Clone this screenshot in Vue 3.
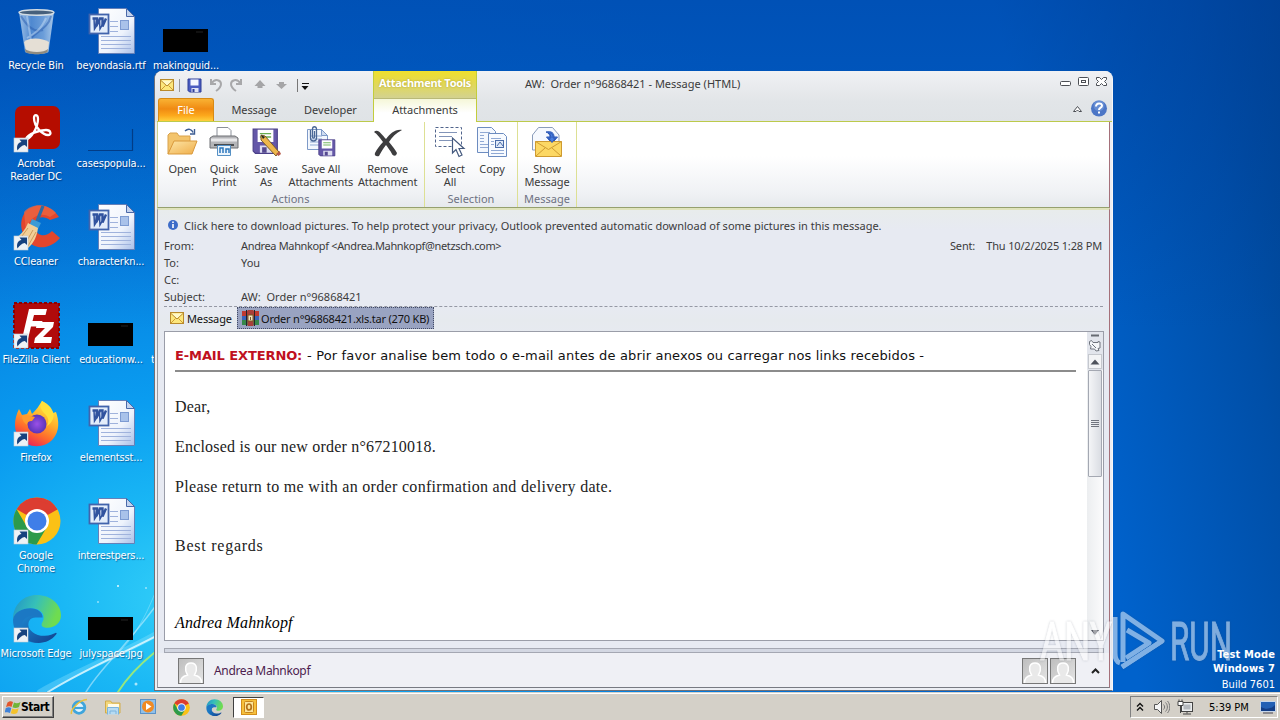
<script setup>
import { ref } from 'vue';

// Desktop shortcuts, placed on the desktop grid by column and row
const shortcuts = [
  { col: 0, row: 0, icon: 'bin', label: ['Recycle Bin'] },
  { col: 0, row: 1, icon: 'acrobat', label: ['Acrobat', 'Reader DC'], link: true },
  { col: 0, row: 2, icon: 'ccleaner', label: ['CCleaner'], link: true },
  { col: 0, row: 3, icon: 'filezilla', label: ['FileZilla Client'], link: true },
  { col: 0, row: 4, icon: 'firefox', label: ['Firefox'], link: true },
  { col: 0, row: 5, icon: 'chrome', label: ['Google', 'Chrome'], link: true },
  { col: 0, row: 6, icon: 'edge', label: ['Microsoft Edge'], link: true },
  { col: 1, row: 0, icon: 'word', label: ['beyondasia.rtf'] },
  { col: 1, row: 1, icon: 'blank', label: ['casespopula...'] },
  { col: 1, row: 2, icon: 'word', label: ['characterkn...'] },
  { col: 1, row: 3, icon: 'black', label: ['educationw...'] },
  { col: 1, row: 4, icon: 'word', label: ['elementsst...'] },
  { col: 1, row: 5, icon: 'word', label: ['interestpers...'] },
  { col: 1, row: 6, icon: 'black', label: ['julyspace.jpg'] },
  { col: 2, row: 0, icon: 'black', label: ['makingguid...'] },
];

const groups = [
  {
    name: 'Actions',
    width: 268,
    buttons: [
      { icon: 'open', label: ['Open'], width: 41 },
      { icon: 'print', label: ['Quick', 'Print'], width: 43 },
      { icon: 'saveas', label: ['Save', 'As'], width: 41 },
      { icon: 'saveall', label: ['Save All', 'Attachments'], width: 69 },
      { icon: 'remove', label: ['Remove', 'Attachment'], width: 65 },
    ],
  },
  {
    name: 'Selection',
    width: 93,
    buttons: [
      { icon: 'select', label: ['Select', 'All'], width: 42 },
      { icon: 'copy', label: ['Copy'], width: 42 },
    ],
  },
  {
    name: 'Message',
    width: 59,
    buttons: [{ icon: 'show', label: ['Show', 'Message'], width: 50 }],
  },
];

const headers = [
  { name: 'From:', value: 'Andrea Mahnkopf <Andrea.Mahnkopf@netzsch.com>', tight: true },
  { name: 'To:', value: 'You' },
  { name: 'Cc:', value: '' },
  { name: 'Subject:', value: 'AW:  Order n°96868421' },
];

const title = ref('AW:  Order n°96868421 - Message (HTML)');
</script>

<template>
  <div class="desktop">
    <!-- Shared gradients and symbols -->
    <svg class="defs" width="0" height="0">
      <defs>
        <linearGradient id="paper" x1="0" y1="0" x2="1" y2="1">
          <stop offset="0" stop-color="#fff" />
          <stop offset=".6" stop-color="#eef3fc" />
          <stop offset="1" stop-color="#a9bfe8" />
        </linearGradient>
        <linearGradient id="glass" x1="0" x2="1">
          <stop offset="0" stop-color="#b9d3ee" />
          <stop offset=".35" stop-color="#5d92d4" />
          <stop offset=".7" stop-color="#7fabdf" />
          <stop offset="1" stop-color="#c5dcf2" />
        </linearGradient>
        <linearGradient id="fox" x1=".8" y1="0" x2=".3" y2="1">
          <stop offset="0" stop-color="#fff14a" />
          <stop offset=".4" stop-color="#ffb02a" />
          <stop offset=".7" stop-color="#ff6a2c" />
          <stop offset="1" stop-color="#e8205a" />
        </linearGradient>
        <radialGradient id="globe">
          <stop offset="0" stop-color="#9a50e8" />
          <stop offset="1" stop-color="#5a35b8" />
        </radialGradient>
        <linearGradient id="edge1" x1="0" x2="1" y2=".3">
          <stop offset="0" stop-color="#2191c8" />
          <stop offset=".5" stop-color="#36c0b8" />
          <stop offset="1" stop-color="#6fdc50" />
        </linearGradient>
        <linearGradient id="edge2" x1="0" x2="1" y2="1">
          <stop offset="0" stop-color="#1c86d0" />
          <stop offset="1" stop-color="#123f8c" />
        </linearGradient>
        <linearGradient id="folder" x1="0" y1="0" x2="1" y2="1">
          <stop offset="0" stop-color="#fde6a8" />
          <stop offset="1" stop-color="#efad48" />
        </linearGradient>
        <linearGradient id="silver" x1="0" y1="0" x2="1" y2="1">
          <stop offset="0" stop-color="#bdbdbd" />
          <stop offset="1" stop-color="#e6e6e6" />
        </linearGradient>
      </defs>
      <symbol id="sym-mail" viewBox="0 0 14 12">
        <rect x=".5" y=".5" width="13" height="11" fill="#fce77c" stroke="#b98a2c" />
        <path d="M1 11l4.500-4.500M13 11L8.500 6.500" stroke="#cf9a33" fill="none" />
        <path d="M1 1.500l6 5.500 6-5.500" stroke="#b98a2c" fill="#fff8c8" />
      </symbol>
      <symbol id="sym-floppy" viewBox="0 0 24 24">
        <path d="M1 1h21.500v21.500H3l-2-2z" fill="#6457a8" stroke="#4a3f88" />
        <path d="M5 1.500h14v11H5z" fill="#fff" />
        <path d="M7 5h10M7 8h10" stroke="#68ae50" stroke-width="1.200" />
        <path d="M7 15.500h12V22H7z" fill="#dcdcf0" />
        <path d="M9 17h4v5H9z" fill="#55498f" />
      </symbol>
      <symbol id="sym-save" viewBox="0 0 15 15">
        <path d="M1 1h13v13H2.500L1 12.500z" fill="#4a5cc0" stroke="#2f3f98" />
        <path d="M3.500 1.500h8v6h-8z" fill="#f4f7ff" />
        <path d="M4.500 10h7v4h-7z" fill="#dfe3f6" />
        <path d="M5.500 11h2v3h-2z" fill="#2f3f98" />
      </symbol>
      <symbol id="sym-chrome" viewBox="0 0 48 48">
        <circle cx="24" cy="24" r="23.500" fill="#fbc116" />
        <path d="M24 24L3.600 12.200A23.500 23.500 0 0 1 44.400 12.500z" fill="#dc3d31" />
        <path d="M24 12.500h20.400L41 8 24 4z" fill="#dc3d31" />
        <path d="M24 24l10 6-10.500 17.500A23.500 23.500 0 0 1 3.600 12.200L14 30z" fill="#2c9a4b" />
        <circle cx="24" cy="24" r="12" fill="#fff" />
        <circle cx="24" cy="24" r="9.500" fill="#3f7ee8" />
      </symbol>
      <symbol id="sym-edge" viewBox="0 0 48 48">
        <path
          d="M1 25C1 10 12 1 24 1c14 0 24 9 24 20 0 7-6 12-13 12-5 0-6-2-6-3 0-2 2-3 2-7 0-5-5-9-12-9C10 14 3 18 1 25z"
          fill="url(#edge1)"
        />
        <path
          d="M1 25c1-7 9-11 17-11 7 0 12 4 12 9h-7c-5 0-8 4-8 9 0 8 8 15 17 14-12 5-31-1-31-21z"
          fill="#1b78c4"
        />
        <path
          d="M16 30c0 5 6 11 16 11 5 0 8-2 11-3 1 0 1 1 0 2-4 5-10 8-17 8C17 48 9 42 9 33c0-7 5-12 13-12-4 2-6 5-6 9z"
          fill="url(#edge2)"
        />
      </symbol>
      <symbol id="sym-person" viewBox="0 0 26 26">
        <rect x=".5" y=".5" width="25" height="25" fill="url(#silver)" stroke="#777" />
        <path
          d="M2.500 25c0-5 2-6.500 7-8-3-5-3-12 3.500-12s6.500 7 3.500 12c5 1.500 7 3 7 8"
          fill="#e9e9e9"
          stroke="#fff"
          stroke-width="1.500"
        />
      </symbol>
    </svg>

    <!-- Light rays at the bottom of the wallpaper -->
    <svg class="rays" width="156" height="150" viewBox="0 0 156 150">
      <g fill="none" stroke-linecap="round">
        <path d="M40 122C85 97 120 85 160 62" stroke="#8fe4ff" stroke-width="6" opacity=".35" />
        <path d="M48 122C85 99 122 84 160 64" stroke="#e8fbff" stroke-width="2" opacity=".8" />
        <path d="M86 122C100 98 122 82 160 30" stroke="#dff8ff" stroke-width="1.500" opacity=".5" />
        <path d="M118 122C128 106 142 92 160 78" stroke="#a5ec70" stroke-width="2" opacity=".9" />
        <path d="M110 90C125 78 142 60 160 10" stroke="#dff8ff" opacity=".3" />
      </g>
      <g fill="#e8fbff">
        <circle cx="118" cy="16" r="1" />
        <circle cx="136" cy="114" r="1.500" opacity=".7" />
        <circle cx="146" cy="18" r=".8" />
        <circle cx="98" cy="32" r=".8" />
      </g>
    </svg>

    <span class="clipped">t</span>

    <!-- Desktop icons -->
    <div
      v-for="s in shortcuts"
      :key="s.label[0]"
      class="shortcut"
      :style="{ left: s.col * 75 - 2 + 'px', top: 8 + s.row * 98 + 'px' }"
    >
      <svg class="shortcut-icon" viewBox="0 0 48 48">
        <g v-if="s.icon === 'bin'">
          <path d="M7 4h35l-5.500 40c-3 3-20 3-23.500 0z" fill="url(#glass)" opacity=".85" />
          <path d="M12 34c6-5 18-4 25 0l-1 9c-5 3-18 3-22 0z" fill="#e5dfd5" />
          <path d="M13 41c5 4 19 4 23 0l-.5 3c-3 3-19 3-22 0z" fill="#8f8b80" />
          <path d="M9 8c8 14 16 16 22 14M39 8c-3 12-12 14-20 22" stroke="#2a5cae" stroke-width="2" opacity=".5" fill="none" />
          <path d="M15 8l4 24M34 10c-5 12-12 16-19 20" stroke="#dcecfb" stroke-width="2" opacity=".4" fill="none" />
          <ellipse cx="24.500" cy="4.500" rx="17.500" ry="2.800" fill="#46607c" stroke="#d4dde4" stroke-width="1.400" />
        </g>
        <g v-else-if="s.icon === 'word'">
          <path d="M11.500.5h28l8 8v37h-36z" fill="url(#paper)" stroke="#6580b8" />
          <path d="M39.500.5v8h8z" fill="#c3d3ee" stroke="#4a68a8" />
          <path d="M23 13.500h8M23 18.500h8M23 23.500h8M14 28.500h30M14 32.500h30M14 36.500h30M14 40.500h30" stroke="#9fb2dc" />
          <rect x="33.500" y="12.500" width="8" height="9" fill="#a9c2ea" stroke="#7d9bd2" />
          <rect x="2.500" y="6.500" width="19" height="19" fill="#e3edfb" stroke="#4264ac" stroke-width="1.800" />
          <path d="M5.500 10.500h4.500l-1 8 4-8h2.500l0 8 3.500-8" fill="none" stroke="#31539f" stroke-width="2.400" />
          <path d="M7 10.500l.5 10.500 5-8 .5 8 5-9" fill="none" stroke="#31539f" stroke-width="1.500" />
        </g>
        <g v-else-if="s.icon === 'black'">
          <rect x="1" y="21" width="45" height="23" fill="#000" />
          <path d="M34 24h7" stroke="#222" />
        </g>
        <path v-else-if="s.icon === 'blank'" d="M1 44.500h44.500V23" fill="none" stroke="#023c86" stroke-width="1.200" />
        <g v-else-if="s.icon === 'acrobat'">
          <rect x="3" y="0" width="45" height="43" rx="7" fill="#b50d00" />
          <path
            d="M14 33c4 1 12-11 12-20 0-5-4-5-4-1 0 9 9 17 14 17 4 0 3-5-2-5-7 0-18 4-20 9z"
            fill="none"
            stroke="#fff"
            stroke-width="2.300"
          />
        </g>
        <g v-else-if="s.icon === 'ccleaner'">
          <path
            d="M47 13C41 4 30-1 21 3 9 7 6 22 13 33c6 12 23 15 35 1l-8-7c-7 7-15 5-17-3-3-8 6-15 15-8z"
            fill="#e2462d"
          />
          <path d="M12 8C20-1 35-1 44 9l-6 4C27 7 16 14 14 28z" fill="#ee6a45" opacity=".7" />
          <path d="M31 2l-6 15" stroke="#2a6da8" stroke-width="3.200" />
          <path d="M20 15l9 4-3 6-9-3z" fill="#3c9bd6" />
          <path d="M16 19l10 5c-1 8-4 15-10 20L3 34c6-3 10-8 13-15z" fill="#f2cf98" />
          <path d="M16 24L7 36M21 26l-8 14M24 28l-8 14" stroke="#cf9a5a" />
        </g>
        <g v-else-if="s.icon === 'filezilla'">
          <rect x="2" y="1" width="45" height="45" fill="#b10b0b" stroke="#8c0000" stroke-width="2" stroke-dasharray="3 2" />
          <path d="M10 37l7-30h18l-1.500 6H22l-1.500 6h10l-1.500 5.500H19L16 37z" fill="#fff" />
          <path d="M25 20h17l-1 5-10 10h9l-1 6H22l1-5 10-10h-9z" fill="#fff" />
        </g>
        <g v-else-if="s.icon === 'firefox'">
          <path
            d="M30 1c6 3 9 8 11 12l3-1c3 8 4 19-3 27-9 10-25 9-33 0C1 31 2 19 7 9l3 6 5-1 3-5 2 5c4-4 7-8 10-13z"
            fill="url(#fox)"
          />
          <circle cx="25" cy="24" r="9.500" fill="url(#globe)" />
          <path d="M10 16c5-2 9 0 13 1l-3 4c-3 0-5 1-5 4-3-2-5-5-5-9z" fill="#ff9b2c" />
          <path d="M30 1c-3 5-1 9 3 13s4 8 2 12c5-3 8-9 6-14C39 7 36 4 30 1z" fill="#ffe03c" />
        </g>
        <use v-else-if="s.icon === 'chrome'" href="#sym-chrome" x="1" y="-1" width="48" height="48" />
        <use v-else href="#sym-edge" x="0" y="-2" width="49" height="49" />
        <!-- Shortcut arrow -->
        <g v-if="s.link">
          <rect x="2" y="32" width="14" height="14" fill="#eef2f6" stroke="#c2ccd8" stroke-width=".6" />
          <path d="M5.500 44.500c-1.500-5 1-8 4-8.500l-2-2.500h7.500v7.500l-2.200-2c-3 .5-4.800 2-7.300 5.500z" fill="#17427e" />
        </g>
      </svg>
      <span v-for="line in s.label" :key="line" class="shortcut-label">{{ line }}</span>
    </div>

    <!-- Build number -->
    <div class="build">
      <strong>Test Mode</strong>
      <strong>Windows 7</strong>
      <span>Build 7601</span>
    </div>

    <!-- Outlook message window -->
    <section class="window">
      <header class="caption">
        <div class="caption-left">
          <div class="quick">
            <svg width="150" height="20" viewBox="0 0 150 20">
              <use href="#sym-mail" x="1" y="4" width="14" height="12" />
              <path d="M20.500 4v13" stroke="#999" />
              <use href="#sym-save" x="28" y="3" width="15" height="15" />
              <g fill="none" stroke="#a8a8aa" stroke-width="2">
                <path d="M52 4v5h5M52.500 8.500C56 3 62 5 62 9c0 3-2 5-5 7" />
                <path d="M82 4v5h-5M81.500 8.500C78 3 72 5 72 9c0 3 2 5 5 7" />
              </g>
              <path d="M101 5l5.500 6h-3v2h-5v-2h-3zM122.500 14l5.500-5h-3V7h-5v2h-3z" fill="#a5a5a7" />
              <path d="M138.500 4v13" stroke="#777" />
              <path d="M143 8.500h7" stroke="#111" />
              <path d="M142.500 11h7l-3.500 4z" fill="#111" />
            </svg>
          </div>
          <nav class="tabs">
            <span class="tab file">File</span>
            <span class="tab message">Message</span>
            <span class="tab developer">Developer</span>
          </nav>
        </div>
        <div class="context">
          <div class="context-title">Attachment Tools</div>
          <div class="context-tab">Attachments</div>
        </div>
        <div class="caption-right">
          <span class="title">{{ title }}</span>
          <svg class="controls" width="50" height="48" viewBox="0 0 50 48">
            <g fill="#fff" stroke="#4c4f55">
              <rect x="1.500" y="10.500" width="10" height="4" rx="1" />
              <rect x="19.500" y="6.500" width="10" height="8" rx="1" />
              <rect x="22.500" y="9.500" width="4" height="2" />
              <path d="M37.500 6.500h3l2 2 2-2h3v2l-2 2 2 2v2h-3l-2-2-2 2h-3v-2l2-2-2-2z" />
              <path d="M14.500 40.500l4-5 4 5h-2.500l-1.500-1.500-1.500 1.500z" />
            </g>
            <circle cx="40" cy="37.500" r="8" fill="#4c76c6" />
            <circle cx="40" cy="34.500" r="5.500" fill="#7fa3e0" opacity=".5" />
            <path d="M37 35.500c0-4 6-4 6-.8 0 2-3 2-3 4.300M40 40.500v2" fill="none" stroke="#fff" stroke-width="2" />
          </svg>
        </div>
      </header>

      <!-- Ribbon -->
      <div class="ribbon">
        <div v-for="g in groups" :key="g.name" class="group" :style="{ width: g.width + 'px' }">
          <div class="group-buttons">
            <div v-for="b in g.buttons" :key="b.icon" class="ribbon-btn" :style="{ width: b.width + 'px' }">
              <svg width="32" height="32" viewBox="0 0 32 32">
                <g v-if="b.icon === 'open'">
                  <path d="M2 28V9l2-2h7l2 3h11v5" fill="#f3c46c" stroke="#d9a24c" />
                  <path d="M2 28l6-13h23l-5 13z" fill="url(#folder)" stroke="#d9993c" />
                  <path d="M19 5c3-3 7-2 8 1.500M28.500 3v5h-4.500" fill="none" stroke="#3c5c92" stroke-width="1.400" />
                </g>
                <g v-else-if="b.icon === 'print'">
                  <path d="M9 12V1.500h11l3 3V12" fill="#fff" stroke="#8a8f98" />
                  <path d="M2 12l3-2h22l3 2v10H2z" fill="#b4b5b8" stroke="#6e7074" />
                  <path d="M3 12.500h26v3H3z" fill="#e8e8ea" />
                  <path d="M6 18h20v2H6z" fill="#4a4c50" />
                  <path d="M9.500 19.500h13v10h-13z" fill="#eaf4fd" stroke="#5590c4" />
                  <path d="M12 27v-5h3v5m3 0v-4h3v4" fill="none" stroke="#2c77bc" stroke-width="1.500" />
                </g>
                <g v-else-if="b.icon === 'saveas'">
                  <use href="#sym-floppy" x="2" y="2" width="27" height="27" />
                  <path d="M11 9l4 1 14 16-3 4-15-16z" fill="#edb74c" stroke="#7a5c28" />
                  <path d="M11 9l2 4 2-2z" fill="#222" />
                  <path d="M26 28l3.500-3 1.500 3-2.500 2z" fill="#b65a48" />
                </g>
                <g v-else-if="b.icon === 'saveall'">
                  <path d="M2.500 3.500h14l6 6v14h-20z" fill="#f4f8fe" stroke="#7e9ac8" />
                  <path d="M5 10h12M5 13h12M5 16h12M5 19h12" stroke="#8fa9d4" />
                  <path d="M16.500 3.500v6h6z" fill="#cfdcf0" stroke="#7e9ac8" />
                  <path d="M5.500 4v8c0 4 6 4 6 0V3c0-3-4-3-4 0v8c0 1.500 2 1.500 2 0V5" fill="none" stroke="#4a6796" stroke-width="1.300" />
                  <use href="#sym-floppy" x="13" y="13" width="18" height="18" />
                </g>
                <path
                  v-else-if="b.icon === 'remove'"
                  d="M2 6c4-4 8 3 12 7 4-5 9-10 16-9-6 3-10 7-13 12 3 4 6 7 8 11-1 4-4 3-5 1-2-4-4-6-6-9-3 4-5 7-7 11-3 1-5-1-4-3 2-4 5-8 8-11C8 12 5 8 2 6z"
                  fill="#3d3d3f"
                />
                <g v-else-if="b.icon === 'select'">
                  <rect x="1.500" y="1.500" width="26" height="19" fill="none" stroke="#50648c" stroke-dasharray="3 2" />
                  <path d="M5 6.500h18M5 10.500h13M5 14.500h14" stroke="#8294b8" />
                  <path d="M18.500 12v15l3.500-3.500 3 7 3-1.500-3-6.500h5z" fill="#fff" stroke="#44597e" stroke-width="1.200" />
                </g>
                <g v-else-if="b.icon === 'copy'">
                  <path d="M1.500 1.500h14l4 4v21h-18z" fill="#f4f8fe" stroke="#6c8cc0" />
                  <path d="M4 6.500h10M4 9.500h4M4 12.500h4M4 15.500h4M4 18.500h12M4 21.500h12" stroke="#90a9d4" />
                  <path d="M12.500 7.500h15l3 3v20h-18z" fill="#f8fbff" stroke="#6c8cc0" />
                  <path d="M15 12.500h10M15 15.500h3M15 18.500h3M15 24.500h13M15 27.500h13" stroke="#90a9d4" />
                  <rect x="19.500" y="14.500" width="8" height="7" fill="#dfe9f8" stroke="#4a6ca8" />
                  <path d="M21 20l3-4 3 4" fill="none" stroke="#4a6ca8" />
                </g>
                <g v-else>
                  <path d="M1.500 24V9l6-7.500h14L28 9v15z" fill="#f6f9fe" stroke="#8a9cba" />
                  <path d="M15 6c6-1 8 1 8 5h3.500L21 17.500 15.500 11H19c0-2-1-4-4-5z" fill="#4a7fe0" stroke="#2c57b4" />
                  <path d="M4.500 15.500h26v15h-26z" fill="#fcd864" stroke="#cf9b30" />
                  <path d="M4.500 15.500l13 8 13-8M5 30l9-8M30 30l-9-8" fill="none" stroke="#cf9b30" />
                  <path d="M17 7c4 0 5 1 5 5h2.500L21 16.500 17.500 12H20c0-3-1-4-3-5z" fill="#4a7fe0" stroke="#2c57b4" />
                </g>
              </svg>
              <span v-for="line in b.label" :key="line">{{ line }}</span>
            </div>
          </div>
          <div class="group-name">{{ g.name }}</div>
        </div>
      </div>

      <div class="content">
        <div class="info">
          <svg width="10" height="10" viewBox="0 0 10 10">
            <circle cx="5" cy="5" r="5" fill="#3d6cc8" />
            <path d="M5 1.500v1.500M5 4v4" stroke="#fff" stroke-width="1.600" />
          </svg>
          <span>Click here to download pictures. To help protect your privacy, Outlook prevented automatic download of some pictures in this message.</span>
        </div>
        <div class="headers">
          <div>
            <div v-for="h in headers" :key="h.name" class="header-row">
              <span class="header-name">{{ h.name }}</span>
              <span class="header-value" :class="{ tight: h.tight }">{{ h.value }}</span>
            </div>
          </div>
          <div class="sent"><span>Sent:</span><span>Thu 10/2/2025 1:28 PM</span></div>
        </div>

        <!-- Attachment tabs -->
        <div class="attachments">
          <div class="att message-att">
            <svg width="14" height="12"><use href="#sym-mail" /></svg>
            <span>Message</span>
          </div>
          <div class="att selected">
            <svg width="17" height="16" viewBox="0 0 17 16">
              <rect y="1" width="17" height="5" fill="#c0392f" />
              <rect y="6" width="17" height="4" fill="#3a63b8" />
              <rect y="10" width="17" height="5" fill="#35884a" />
              <path d="M4.500 0v16M12.500 0v16" stroke="#23252c" stroke-width="1" />
              <rect x="5.500" y="0" width="6" height="16" fill="#a8403a" />
              <rect x="6" y="5" width="5" height="6" fill="#f1e4c0" stroke="#7a5a24" />
              <path d="M8.500 7v3" stroke="#7a5a24" />
            </svg>
            <span>Order n°96868421.xls.tar (270 KB)</span>
          </div>
        </div>

        <!-- Message body -->
        <div class="body">
          <div class="mail">
            <p class="warning"><b>E-MAIL EXTERNO:</b><span>- Por favor analise bem todo o e-mail antes de abrir anexos ou carregar nos links recebidos -</span></p>
            <p class="dear">Dear,</p>
            <p class="enclosed">Enclosed is our new order n°67210018.</p>
            <p class="please">Please return to me with an order confirmation and delivery date.</p>
            <p class="regards">Best regards</p>
            <p class="sign">Andrea Mahnkopf</p>
          </div>
          <div class="scrollbar">
            <svg width="16" height="38" viewBox="0 0 16 38">
              <path d="M4 3.500h8" stroke="#666a72" stroke-width="2" />
              <path d="M2.500 9.500l2-1 1.500 2h5v-1l2 .5v6l-2 .5 1 2-3 .5-1.500-2h-4l.5-2.500-1.500-2z" fill="#f4f6f8" stroke="#70757e" />
              <path d="M5 12l4 4" stroke="#70757e" />
              <rect x="1.500" y="22.500" width="13" height="14" fill="#f3f4f6" stroke="#c5c8ce" />
              <path d="M3.500 32.500h9l-4.500-5z" fill="#4e525c" />
            </svg>
            <div class="thumb"><i></i><i></i><i></i><i></i></div>
            <div class="arrow-down"></div>
          </div>
        </div>

        <div class="splitter"></div>

        <!-- People pane -->
        <footer class="people">
          <svg width="26" height="26"><use href="#sym-person" /></svg>
          <span class="person">Andrea Mahnkopf</span>
          <svg class="avatar" width="26" height="26"><use href="#sym-person" /></svg>
          <svg class="avatar" width="26" height="26"><use href="#sym-person" /></svg>
          <svg class="expand" width="9" height="6" viewBox="0 0 9 6"><path d="M1 5l3.500-3.500L8 5" fill="none" stroke="#222" stroke-width="2" /></svg>
        </footer>
      </div>
    </section>

    <!-- Watermark -->
    <svg class="watermark" width="200" height="80" viewBox="0 0 200 80">
      <text x="4" y="52" textLength="72" lengthAdjust="spacingAndGlyphs">ANY</text>
      <text x="134" y="52" textLength="62" lengthAdjust="spacingAndGlyphs">RUN</text>
      <g fill="none" stroke="#fff" stroke-width="5" stroke-linejoin="round">
        <path d="M87 54V6l39 27-40 26" />
        <path d="M91 22l22 13-23 15" />
        <path d="M79 9v36c0 6 2 9 5 10M126 33l-40 26" />
      </g>
    </svg>

    <!-- Taskbar -->
    <div class="taskbar">
      <div class="start">
        <svg width="16" height="15" viewBox="0 0 16 15">
          <path d="M2.500 2.500C5 .5 6.500 1 8 2L6.500 7C5 6 3.500 6 1 7z" fill="#e2562c" />
          <path d="M9 2.500c2 1 4 1 6.500-.5L14 7c-2.500 1.500-4.500 1.300-6.500.3z" fill="#72b536" />
          <path d="M.8 8c2-1 4-1 5.500 0L5 13C3.500 12-1 12-.5 13z" fill="#3f82d8" />
          <path d="M7.200 8.500c2 1 4 1 6.500-.2L12.200 13c-2 1.500-4.500 1.300-6.500.3z" fill="#f4c22c" />
        </svg>
        <b>Start</b>
      </div>
      <div class="launch">
        <svg width="18" height="18" viewBox="0 0 18 18">
          <circle cx="9" cy="9.500" r="5.800" fill="#e4f4fc" stroke="#3fa5dc" stroke-width="2.800" />
          <path d="M4 10h11" stroke="#3fa5dc" stroke-width="2.200" />
          <path d="M1.500 16C0 12 9 2 17 1.500" fill="none" stroke="#e8c23c" stroke-width="1.500" />
        </svg>
        <svg width="18" height="18" viewBox="0 0 18 18">
          <path d="M1.500 15V3h5l1.500 2h8v10z" fill="#f2d77c" stroke="#d2ac4a" />
          <path d="M4 6h11v4H4z" fill="#fffbe8" />
          <path d="M3.500 16.500V9.500h11v7M6 16v-3h6v3" fill="#b7dbf2" stroke="#7cb4dc" />
        </svg>
        <svg width="18" height="18" viewBox="0 0 18 18">
          <rect x="1.500" y="1.500" width="15" height="14" fill="#8fc0ea" stroke="#5a92c8" />
          <circle cx="9" cy="8.500" r="6" fill="#f08a24" />
          <path d="M7 5v7l5.500-3.500z" fill="#fff" />
        </svg>
        <svg width="17" height="17"><use href="#sym-chrome" /></svg>
        <svg width="17" height="17"><use href="#sym-edge" /></svg>
      </div>
      <div class="running">
        <svg width="18" height="18" viewBox="0 0 18 18">
          <rect x="1.500" y="1.500" width="15" height="15" fill="#f6c03c" stroke="#d48e1c" />
          <rect x="4.500" y="3.500" width="9" height="11" rx="1" fill="#fbe49a" stroke="#c8831c" />
          <ellipse cx="9" cy="9" rx="2.300" ry="3" fill="none" stroke="#b5711a" stroke-width="1.700" />
        </svg>
      </div>
      <div class="tray">
        <svg width="8" height="10" viewBox="0 0 8 10"><path d="M1 4.500l3-3 3 3M1 8.500l3-3 3 3" fill="none" stroke="#111" stroke-width="1.400" /></svg>
        <svg class="speaker" width="17" height="16" viewBox="0 0 17 16">
          <path d="M1.500 5.500h3l4-4v13l-4-4h-3z" fill="#f4f4f4" stroke="#555" />
          <path d="M10.500 5.500c1.500 1.500 1.500 3.500 0 5M12.500 3.500c2.500 2.500 2.500 6.500 0 9M14.500 2c3 3.500 3 8.500 0 12" fill="none" stroke="#777" />
        </svg>
        <svg class="network" width="16" height="16" viewBox="0 0 16 16">
          <rect x="4.500" y="3.500" width="11" height="9" fill="#eceeef" stroke="#444" />
          <rect x="6.500" y="5.500" width="7" height="5" fill="#b4b8bd" />
          <path d="M6 15h8M10 12.500v2" stroke="#444" />
          <path d="M1 2.500h5v4H1zM2 .5v2M5 .5v2M3.500 6.500V14" fill="#fff" stroke="#444" />
        </svg>
        <span class="clock">5:39 PM</span>
        <svg width="16" height="13" viewBox="0 0 16 13">
          <path d="M.5.5h15v10H.5z" fill="#2360b4" stroke="#c6d6ea" />
          <path d="M1 6c5 3 10 2 14-2v6H1z" fill="#143e86" />
          <path d="M3 12h10" stroke="#445" />
        </svg>
      </div>
    </div>
  </div>
</template>

<style>
body {
  overflow: hidden;
}
</style>

<style scoped>
.desktop {
  position: relative;
  width: 1280px;
  height: 720px;
  overflow: hidden;
  display: flex;
  flex-direction: column;
  justify-content: flex-end;
  font-family: 'DejaVu Sans Condensed', 'DejaVu Sans', sans-serif;
  font-size: 11px;
  background:
    linear-gradient(180deg, rgba(0, 64, 160, 0.5) 0, rgba(0, 70, 180, 0) 330px),
    radial-gradient(ellipse 900px 680px at 190px 600px, #34d0f8 0%, #1ab8f5 14%, #0a9cf0 30%, #0580e0 52%, #0064ce 80%, rgba(0, 98, 204, 0) 100%),
    linear-gradient(78deg, #0062cc 80%, #004fa8 93%, #00438e 100%);
}

.defs {
  position: absolute;
}

.rays {
  position: absolute;
  left: 0;
  top: 570px;
}

.clipped {
  position: absolute;
  left: 151px;
  top: 353px;
  color: #fff;
}

/* Desktop icons */
.shortcut {
  position: absolute;
  width: 76px;
  display: flex;
  flex-direction: column;
  align-items: center;
}

.shortcut-icon {
  width: 48px;
  height: 48px;
  margin-bottom: 3px;
  overflow: visible;
}

.shortcut-label {
  color: #fff;
  line-height: 13px;
  letter-spacing: -0.15px;
  white-space: nowrap;
  text-shadow: 1px 1px 1px rgba(0, 20, 70, 0.5);
}

.build {
  position: absolute;
  right: 5px;
  top: 648px;
  display: flex;
  flex-direction: column;
  align-items: flex-end;
  color: #fff;
  line-height: 14px;
}

.build strong {
  letter-spacing: 0.15px;
}

.build span {
  line-height: 18px;
}

/* Window frame */
.window {
  position: absolute;
  left: 154px;
  top: 71px;
  width: 959px;
  height: 620px;
  box-sizing: border-box;
  display: flex;
  flex-direction: column;
  padding: 0 2px 2px;
  border: 1px solid #6f7077;
  border-top: 0;
  border-right-color: #f6f6f8;
  border-radius: 8px 8px 0 0;
  background: #eceef3;
  font-family: 'Noto Sans', 'Open Sans', sans-serif;
  color: #3b3b3b;
  overflow: hidden;
}

.caption {
  display: flex;
  height: 51px;
  margin: 0 -2px;
  padding-left: 2px;
  background: linear-gradient(#f0f1f4, #e2e5e8 60%, #dfe3e6);
}

.caption-left {
  width: 216px;
  display: flex;
  flex-direction: column;
  border-bottom: 1px solid #bcca4c;
}

.quick {
  height: 27px;
  padding: 4px 0 0 2px;
  box-sizing: border-box;
}

.tabs {
  display: flex;
  flex: 1;
}

.tab {
  text-align: center;
  line-height: 23px;
}

.file {
  width: 56px;
  margin-left: 1px;
  box-sizing: border-box;
  border: 1px solid #d88a14;
  border-bottom: 0;
  border-radius: 3px 3px 0 0;
  background: linear-gradient(#f9b233, #f08a12 45%, #fca81c 75%, #ffcf3c);
  color: #fff;
  line-height: 22px;
}

.message {
  width: 80px;
  letter-spacing: -0.1px;
}

.developer {
  width: 73px;
}

.context {
  width: 104px;
  box-sizing: border-box;
  border: 1px solid #c3cd3c;
  border-width: 0 1px;
  background: #fff;
}

.context-title {
  height: 27px;
  border-bottom: 1px solid #b9b978;
  background: linear-gradient(#f0e02c, #e4d94e 40%, #d3d290);
  color: #fff;
  font-weight: bold;
  text-align: center;
  line-height: 24px;
  white-space: nowrap;
  letter-spacing: -0.3px;
  text-shadow: 0 0 2px #a89c30;
}

.context-tab {
  height: 23px;
  line-height: 22px;
  text-align: center;
  background: linear-gradient(#f5f7d8, #fff 60%);
}

.caption-right {
  flex: 1;
  display: flex;
  justify-content: space-between;
  padding-left: 48px;
  border-bottom: 1px solid #bcca4c;
}

.title {
  line-height: 25px;
  white-space: pre;
}

.controls {
  margin-right: 3px;
}

/* Ribbon */
.ribbon {
  display: flex;
  height: 86px;
  box-sizing: border-box;
  border-bottom: 1px solid #95a06e;
  border-left: 1px solid #c9d28c;
  border-right: 1px solid #a5707a;
  background: linear-gradient(#fff 40%, #eff1f4 85%, #e6e9ed);
}

.group {
  box-sizing: border-box;
  display: flex;
  flex-direction: column;
  border-right: 1px solid #dde094;
}

.group:first-child {
  margin-left: -1px;
}

.group-buttons {
  display: flex;
  flex: 1;
  padding: 4px 4px 0 5px;
}

.group:not(:first-child) .group-buttons {
  padding-left: 4px;
}

.ribbon-btn {
  display: flex;
  flex-direction: column;
  align-items: center;
  line-height: 13px;
}

.ribbon-btn svg {
  flex: none;
  margin-bottom: 4px;
}

.ribbon-btn span {
  white-space: nowrap;
  letter-spacing: -0.1px;
}

.group-name {
  height: 15px;
  line-height: 13px;
  text-align: center;
  color: #6e7282;
}

/* Message headers */
.content {
  flex: 1;
  display: flex;
  flex-direction: column;
  padding: 0 6px 0 6px;
  border: 1px solid #a5707a;
  border-top: 2px solid #dfe3bc;
  border-left-color: #9a9aa0;
  border-bottom-color: #777a82;
  background: linear-gradient(#e8ecec, #e7eaf2 20px, #e7eaf2 95px, #e6eaee 110px, #e7eaf2 135px);
}

.info {
  display: flex;
  align-items: center;
  gap: 6px;
  height: 27px;
  padding: 3px 0 0 4px;
  box-sizing: border-box;
  white-space: nowrap;
}

.headers {
  display: flex;
  justify-content: space-between;
  height: 69px;
  border-bottom: 1px dashed #9598a4;
}

.header-row {
  display: flex;
  height: 17px;
  line-height: 18px;
}

.header-name {
  width: 77px;
}

.header-value {
  white-space: pre;
}

.header-value.tight {
  letter-spacing: -0.35px;
}

.sent {
  display: flex;
  gap: 11px;
  line-height: 18px;
  padding-right: 1px;
  letter-spacing: -0.15px;
}

.attachments {
  display: flex;
  height: 24px;
}

.att {
  display: flex;
  align-items: center;
  box-sizing: border-box;
  height: 22px;
  color: #111;
  white-space: nowrap;
}

.message-att {
  width: 73px;
  padding-left: 6px;
  gap: 3px;
}

.message-att span {
  letter-spacing: -0.15px;
}

.selected {
  width: 197px;
  padding-left: 4px;
  gap: 2px;
  border: 1px dotted #444c66;
  background: #99a3c1;
  letter-spacing: -0.2px;
}

/* Message body */
.body {
  display: flex;
  width: 940px;
  height: 310px;
  box-sizing: border-box;
  border: 1px solid #9a9da8;
  background: #fff;
  color: #222;
}

.mail {
  width: 902px;
  padding: 12px 11px 0 10px;
  font-family: 'Liberation Serif', serif;
  font-size: 16px;
}

.mail p {
  margin: 0;
  line-height: 20px;
  white-space: nowrap;
}

.mail .warning {
  display: flex;
  height: 26px;
  border-bottom: 2px solid #8c8c8c;
  margin-bottom: 25px;
  line-height: 24px;
  font-family: 'DejaVu Sans', sans-serif;
  font-size: 13px;
  letter-spacing: 0.16px;
  color: #111;
}

.warning b {
  width: 132px;
  letter-spacing: -0.1px;
  color: #c01020;
}

.mail .dear,
.mail .enclosed {
  margin-bottom: 20px;
  letter-spacing: 0.2px;
}

.mail .please {
  margin-bottom: 39px;
  letter-spacing: 0.31px;
}

.mail .regards {
  margin-bottom: 57px;
  letter-spacing: 0.75px;
}

.mail .sign {
  font-style: italic;
  letter-spacing: 0.15px;
  color: #000;
}

.scrollbar {
  width: 16px;
  display: flex;
  flex-direction: column;
  background: linear-gradient(90deg, #eceef0, #fbfbfc);
}

.scrollbar svg {
  background: #e2e5ec;
}

.thumb {
  height: 105px;
  margin: 0 1px;
  border: 1px solid #a4a8b2;
  border-radius: 1px;
  background: linear-gradient(90deg, #f4f5f7, #dadde3);
  display: flex;
  flex-direction: column;
  align-items: center;
  justify-content: center;
  gap: 1px;
}

.thumb i {
  width: 8px;
  height: 1px;
  background: #70747e;
}

.arrow-down {
  width: 0;
  margin: auto auto 5px 4px;
  border: 4px solid transparent;
  border-top: 5px solid #444852;
  border-bottom: 0;
}

.splitter {
  width: 938px;
  height: 3px;
  margin-top: 7px;
  border: 1px solid #a4a7b2;
  background: #d3d7e2;
}

.people {
  flex: 1;
  display: flex;
  align-items: center;
  margin: 0 -6px;
  padding: 1px 8px 0 20px;
  background: #eff0f5;
}

.person {
  flex: 1;
  margin-left: 10px;
  font-size: 12px;
  letter-spacing: -0.35px;
  color: #4c1c4e;
}

.avatar {
  margin-left: 2px;
}

.expand {
  margin: 0 1px 0 15px;
}

/* Watermark */
.watermark {
  position: absolute;
  left: 1036px;
  top: 608px;
  opacity: 0.5;
  filter: drop-shadow(0 0 1px rgba(60, 70, 90, 0.5));
}

.watermark text {
  font-family: Roboto, sans-serif;
  font-size: 53px;
  font-weight: 400;
  fill: #fff;
  stroke: #fff;
  stroke-width: 1px;
}

/* Taskbar */
.taskbar {
  position: relative;
  display: flex;
  align-items: center;
  height: 28px;
  box-sizing: border-box;
  padding: 1px 2px 0;
  border-top: 1px solid #d4d0c8;
  box-shadow: inset 0 1px #fff;
  background: #d4d0c8;
  color: #000;
}

.start {
  display: flex;
  align-items: center;
  gap: 0;
  width: 52px;
  height: 22px;
  box-sizing: border-box;
  padding-left: 2px;
  border: 1px solid #fff;
  border-right-color: #404040;
  border-bottom-color: #404040;
  box-shadow: inset -1px -1px #808080;
  font-size: 12px;
  letter-spacing: -0.5px;
}

.launch {
  display: flex;
  align-items: center;
  justify-content: space-between;
  width: 153px;
  margin-left: 16px;
}

.running {
  display: flex;
  align-items: center;
  justify-content: center;
  width: 31px;
  height: 21px;
  box-sizing: border-box;
  margin-left: 10px;
  border: 1px solid #404040;
  border-right-color: #fff;
  border-bottom-color: #fff;
  background: #fff;
}

.tray {
  display: flex;
  align-items: center;
  width: 148px;
  height: 22px;
  box-sizing: border-box;
  margin-left: auto;
  padding-left: 5px;
  border: 1px solid #808080;
  border-right-color: #fff;
  border-bottom-color: #fff;
}

.speaker {
  margin-left: 9px;
}

.network {
  margin-left: 7px;
}

.clock {
  width: 40px;
  margin: 0 11px 0 16px;
  white-space: nowrap;
}
</style>
